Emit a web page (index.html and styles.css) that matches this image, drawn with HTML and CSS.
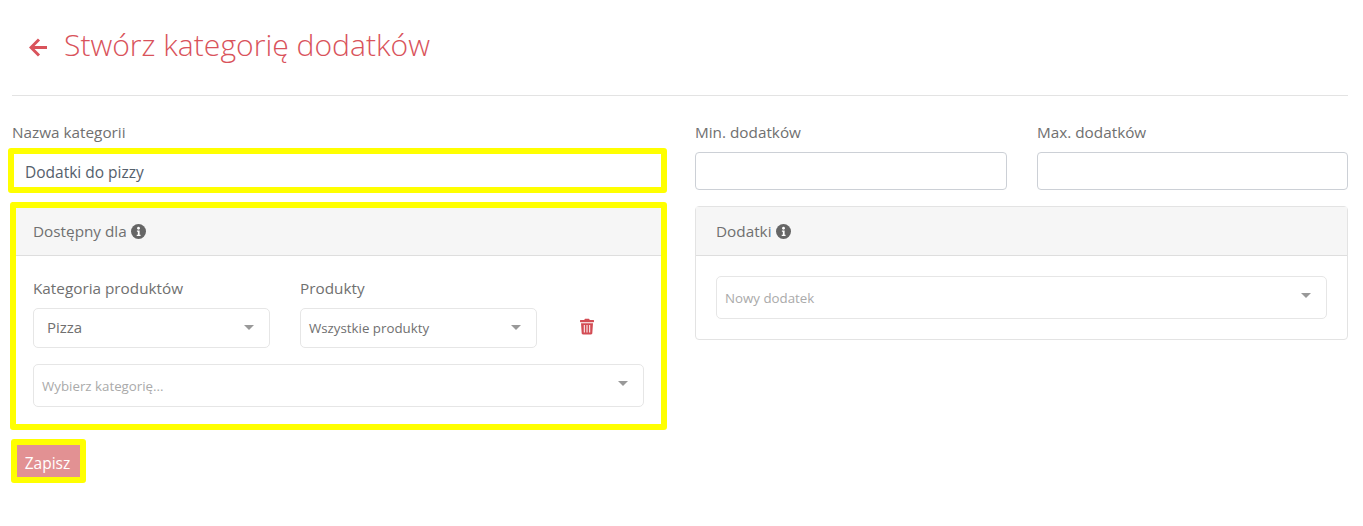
FILE: index.html
```html
<!DOCTYPE html>
<html lang="pl">
  <head>
    <meta charset="UTF-8" />
    <title>Stwórz kategorię dodatków</title>
    <link rel="stylesheet" href="styles.css">
  </head>
  <body>
    <header class="page-header">
      <svg class="back-icon" viewBox="0 0 18 19" aria-hidden="true">
        <path d="M10 1.500 2 9.500l8 8M3 9.500H18" fill="none" stroke="currentColor" stroke-width="3" />
      </svg>
      <h1>Stwórz kategorię dodatków</h1>
    </header>
    <hr />
    <form class="form-grid">
      <div class="column">
        <div class="field">
          <label>Nazwa kategorii</label>
          <div class="input-mark">
            <input class="text-input" value="Dodatki do pizzy" />
          </div>
        </div>
        <section class="card card-mark">
          <div class="card-header">
            Dostępny dla
            <svg class="info-icon" viewBox="0 0 16 16" aria-hidden="true">
              <circle cx="8" cy="8" r="8" fill="currentColor" />
              <circle cx="8" cy="4.500" r="1.500" fill="#fff" />
              <path d="M6.300 7h2.900v4.400h1v1.300H6.100v-1.300h1.200V8.300h-1z" fill="#fff" />
            </svg>
          </div>
          <div class="card-body">
            <div class="product-row">
              <div>
                <label>Kategoria produktów</label>
                <div class="select select-short select-value"><span class="value-text">Pizza</span><span class="caret"></span></div>
              </div>
              <div>
                <label>Produkty</label>
                <div class="select select-short select-small">Wszystkie produkty<span class="caret"></span></div>
              </div>
              <svg class="trash-icon" viewBox="0 0 14 16" aria-hidden="true">
                <path d="M.5 1.600h3.700L5 .2h4l.8 1.400h3.700c.3 0 .5.2.5.5v1.100c0 .3-.2.5-.5.5H.5C.2 3.700 0 3.500 0 3.200V2.100c0-.3.2-.5.5-.5zM1 4.700h12l-.7 10c0 .7-.6 1.200-1.200 1.200H2.900c-.6 0-1.200-.5-1.200-1.200z" fill="currentColor" />
                <path d="M4.300 6.500v7.500M7 6.500v7.500M9.700 6.500v7.500" stroke="#fff" stroke-width="1" />
              </svg>
            </div>
            <div class="select select-placeholder">Wybierz kategorię...<span class="caret"></span></div>
          </div>
        </section>
        <div class="save-mark">
          <button type="button" class="save-button">Zapisz</button>
        </div>
      </div>
      <div class="column">
        <div class="limits">
          <div class="field">
            <label>Min. dodatków</label>
            <input class="text-input" />
          </div>
          <div class="field">
            <label>Max. dodatków</label>
            <input class="text-input" />
          </div>
        </div>
        <section class="card">
          <div class="card-header">
            Dodatki
            <svg class="info-icon" viewBox="0 0 16 16" aria-hidden="true">
              <circle cx="8" cy="8" r="8" fill="currentColor" />
              <circle cx="8" cy="4.500" r="1.500" fill="#fff" />
              <path d="M6.300 7h2.900v4.400h1v1.300H6.100v-1.300h1.200V8.300h-1z" fill="#fff" />
            </svg>
          </div>
          <div class="card-body">
            <div class="select select-placeholder">Nowy dodatek<span class="caret"></span></div>
          </div>
        </section>
      </div>
    </form>
  </body>
</html>
```

FILE: styles.css
```css
* {
  box-sizing: border-box;
  margin: 0;
  padding: 0;
}

body {
  font-family: "Open Sans", "Noto Sans", sans-serif;
  background: #fff;
  color: #707070;
  min-height: 526px;
  padding: 0 15px 0 12px;
}

.page-header {
  display: flex;
  align-items: center;
  height: 95px;
  color: #d9535b;
  padding-left: 17px;
  padding-bottom: 5px;
}

.back-icon {
  width: 18px;
  height: 19px;
  margin-right: 17px;
  margin-top: 5px;
}

h1 {
  font-size: 30.100px;
  font-weight: 300;
  line-height: 40px;
}

hr {
  border: none;
  border-top: 1px solid #e3e3e3;
  margin-bottom: 25px;
}

.form-grid {
  display: grid;
  grid-template-columns: 653px 653px;
  column-gap: 30px;
}

label {
  display: block;
  font-size: 15.300px;
  line-height: 22px;
  color: #707070;
}

.field label {
  margin-bottom: 9px;
}

.field {
  margin-bottom: 16px;
}

.limits {
  display: grid;
  grid-template-columns: 312px 311px;
  column-gap: 30px;
}

.text-input {
  display: block;
  width: 100%;
  height: 38px;
  padding: 1px 12px 0;
  border: 1px solid #ccd0d6;
  border-radius: 4px;
  font-family: inherit;
  font-size: 15.500px;
  color: #55606c;
  background: #fff;
}

.input-mark,
.card-mark {
  position: relative;
}

.input-mark::after,
.card-mark::after {
  content: "";
  position: absolute;
  border: 6px solid #ff0;
  border-radius: 3px;
  pointer-events: none;
}

.input-mark::after {
  inset: -4px -2px -3px -4px;
}

.card-mark::after {
  inset: -5px -3px -3px -3px;
}

.card {
  border: 1px solid #e3e3e3;
  border-radius: 4px;
  background: #fff;
}

.card-header {
  display: flex;
  align-items: center;
  gap: 4px;
  height: 49px;
  padding: 0 20px;
  background: #f6f6f6;
  border-bottom: 1px solid #dedede;
  font-size: 15.300px;
  color: #707070;
}

.info-icon {
  width: 15px;
  height: 15px;
  color: #666;
}

.card-body {
  padding: 20px;
}

.product-row {
  display: grid;
  grid-template-columns: 237px 237px 14px;
  column-gap: 30px;
  margin-top: 1px;
  margin-bottom: 16px;
}

.product-row label {
  margin-bottom: 9px;
}

.select {
  display: flex;
  align-items: center;
  justify-content: space-between;
  height: 43px;
  padding: 0 15px 0 8px;
  border: 1px solid #e6e6e6;
  border-radius: 5px;
  background: #fff;
  font-size: 13.300px;
}

.select-short {
  height: 40px;
}

.select-value {
  padding-left: 13px;
  font-size: 15px;
  color: #707070;
}

.value-text {
  margin-top: -2px;
}

.select-small {
  color: #707070;
}

.select-placeholder {
  color: #aaa;
}

.caret {
  width: 0;
  height: 0;
  margin-top: -4px;
  border-left: 5px solid transparent;
  border-right: 5px solid transparent;
  border-top: 5px solid #999;
}

.select-short .caret {
  margin-top: -1px;
}

.trash-icon {
  width: 14px;
  height: 17px;
  color: #d34c54;
  margin-left: 13px;
  margin-top: 41px;
}

.save-mark {
  width: 75px;
  margin-top: 11px;
  margin-left: -1px;
  border: 6px solid #ff0;
  border-radius: 3px;
}

.save-button {
  display: block;
  width: 63px;
  height: 32px;
  padding: 3px 2px 0 0;
  border: none;
  background: #e29193;
  color: #fff;
  font-family: inherit;
  font-size: 15.500px;
}
```
